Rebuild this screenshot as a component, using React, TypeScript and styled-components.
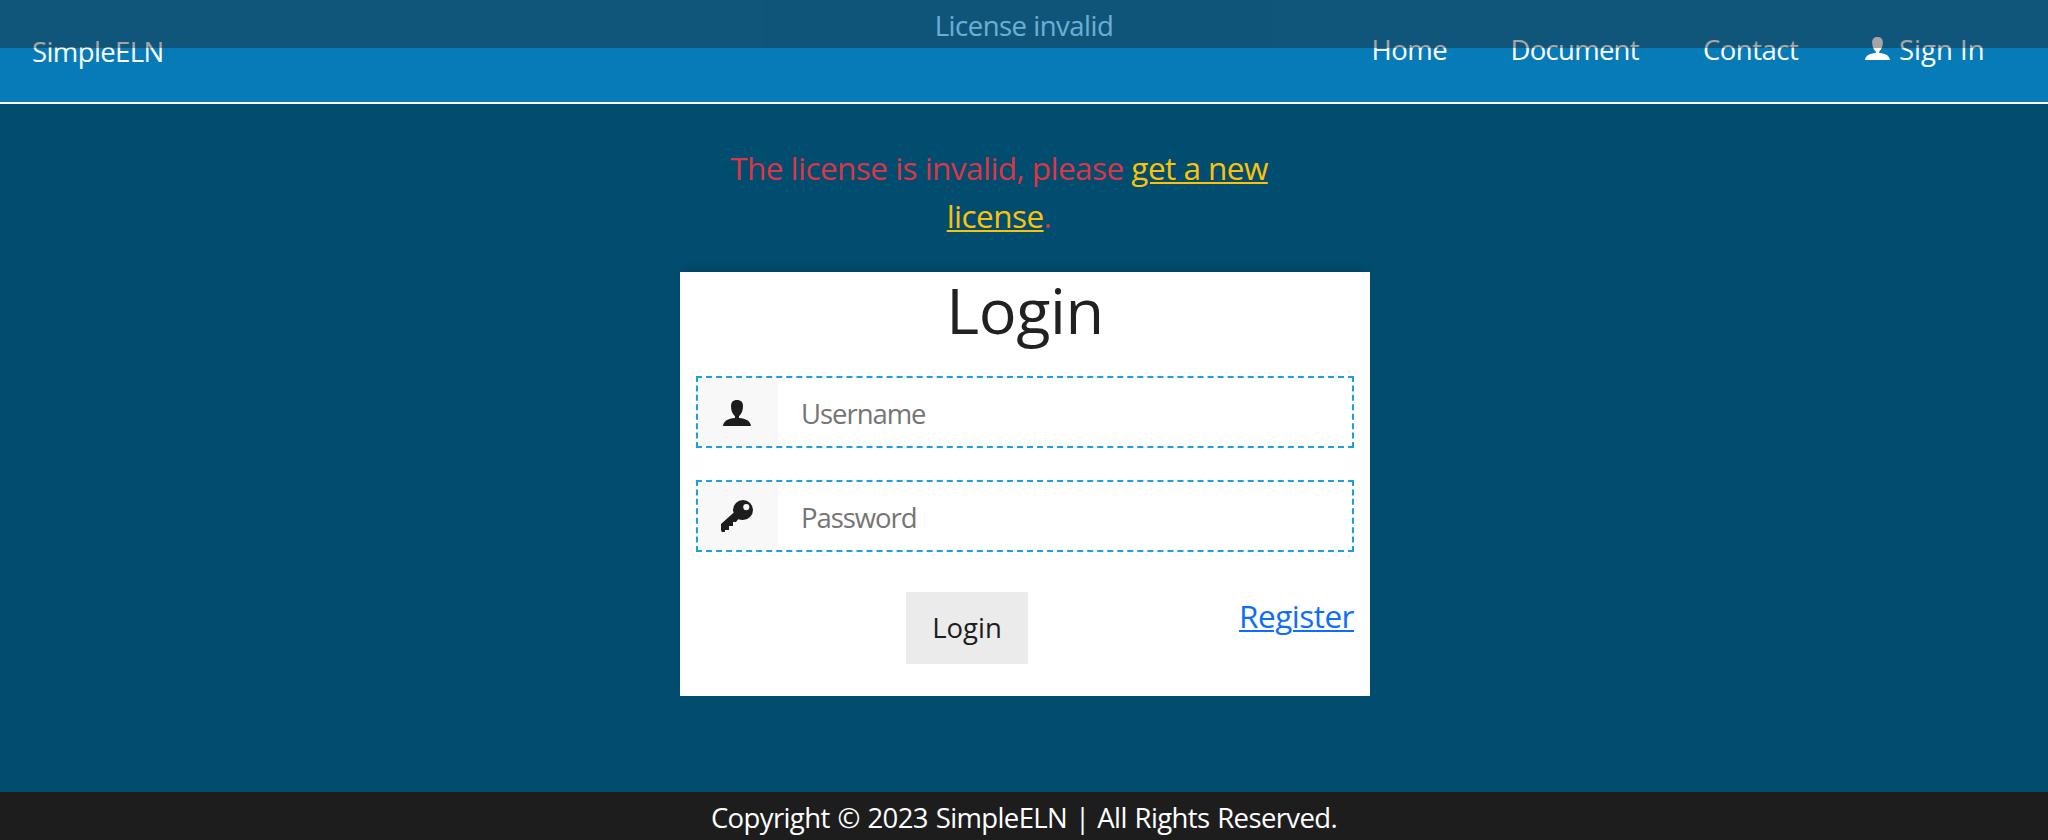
import React from 'react';
import styled, { createGlobalStyle } from 'styled-components';

const GlobalStyle = createGlobalStyle`
  *, *::before, *::after { box-sizing: border-box; }
  body {
    margin: 0;
    background: #004d6f;
    color: #1d1d1d;
    font-family: 'Segoe UI', 'Open Sans', 'Noto Sans', sans-serif;
    font-size: 27.5px;
    letter-spacing: -0.5px;
  }
`;

const Page = styled.div`
  position: relative;
  display: flex;
  flex-direction: column;
  height: 840px;
`;

const LicenseBanner = styled.div`
  position: absolute;
  top: 0;
  left: 0;
  right: 0;
  height: 48px;
  padding-top: 3px;
  line-height: 45px;
  text-align: center;
  color: #fff;
  background: #1d1d1d;
  opacity: 0.4;
`;

const Header = styled.header`
  display: flex;
  flex: none;
  justify-content: space-between;
  height: 104px;
  padding: 0 32px;
  background: #077ab8;
  border-bottom: 2px solid #fff;
`;

const Brand = styled.a`
  line-height: 104px;
  letter-spacing: -0.6px;
  color: #fff;
`;

const Nav = styled.nav`
  display: flex;
`;

const NavLink = styled.a<{ $width: number; $tracking?: number }>`
  display: flex;
  align-items: center;
  width: ${(p) => p.$width}px;
  height: 99px;
  padding-left: 32px;
  white-space: nowrap;
  letter-spacing: ${(p) => p.$tracking ?? -0.5}px;
  color: #fff;
`;

const NavUserIcon = styled.svg`
  flex: none;
  width: 25px;
  height: 23px;
  margin: -2px 9px 0 2px;
`;

const Main = styled.main`
  display: flex;
  flex: 1;
  flex-direction: column;
  width: 690px;
  margin: 0 678px 0 680px;
  padding-top: 40px;
`;

const LicenseMessage = styled.p`
  width: 638px;
  margin: 0 0 32px;
  padding: 0 40px;
  font-size: 31.5px;
  line-height: 48px;
  letter-spacing: -0.54px;
  text-align: center;
  color: #dc3545;
`;

const TextLink = styled.a<{ $color: string }>`
  color: ${(p) => p.$color};
  text-decoration: underline;
  text-decoration-thickness: 2px;
  text-underline-offset: 2px;
`;

const Card = styled.form`
  display: flex;
  flex-direction: column;
  height: 424px;
  padding: 0 16px;
  background: #fff;
  box-shadow: 0 -6px 10px -6px rgba(0, 0, 0, 0.25);
`;

const Title = styled.h1`
  height: 104px;
  margin: 0;
  font-size: 63px;
  font-weight: 400;
  line-height: 76px;
  letter-spacing: -0.4px;
  text-align: center;
  color: #212121;
`;

const Field = styled.label`
  display: flex;
  height: 72px;
  margin-bottom: 32px;
  border: 2px dashed #1ba1e2;
`;

const FieldIcon = styled.span`
  display: flex;
  flex: none;
  align-items: center;
  justify-content: center;
  width: 80px;
  background: #f8f8f8;
`;

const FieldSvg = styled.svg`
  width: 32px;
  height: 32px;
  margin-right: 2px;
`;

const Input = styled.input`
  flex: 1;
  min-width: 0;
  padding: 3px 22px 0 23px;
  border: 0;
  outline: 0;
  background: transparent;
  font: inherit;
  letter-spacing: -1.05px;
  &::placeholder { color: #757575; opacity: 1; }
`;

const Actions = styled.div`
  display: flex;
  align-items: flex-start;
  justify-content: space-between;
  margin-top: 8px;
  padding-left: 210px;
`;

const LoginButton = styled.button`
  width: 122px;
  height: 72px;
  padding: 0 0 1px;
  border: 0;
  background: #ebebeb;
  color: #1d1d1d;
  font: inherit;
  letter-spacing: 0;
`;

const RegisterSlot = styled.span`
  font-size: 31.5px;
  line-height: 48px;
  letter-spacing: -0.5px;
`;

const Footer = styled.footer`
  flex: none;
  height: 48px;
  padding-top: 3px;
  line-height: 45px;
  letter-spacing: -0.62px;
  word-spacing: 1.3px;
  text-align: center;
  color: #fff;
  background: #1d1d1d;
`;

const USER_PATH =
  'M14 0C10 0 8 2.3 8 6c0 4.800 1.400 8 4 10.200V18C5 18.400 0.500 21 0 26H28C27.500 21 23 18.400 16 18v-1.800C18.600 14 20 10.800 20 6C20 2.300 18 0 14 0Z';

export default function App() {
  return (
    <>
      <GlobalStyle />
      <Page>
        <Header>
          <Brand>SimpleELN</Brand>
          <Nav>
            <NavLink $width={139}>Home</NavLink>
            <NavLink $width={192.500} $tracking={-0.72}>Document</NavLink>
            <NavLink $width={160}>Contact</NavLink>
            <NavLink $width={185} $tracking={0}>
              <NavUserIcon viewBox="0 0 28 26" fill="#fff" preserveAspectRatio="none">
                <path d={USER_PATH} />
              </NavUserIcon>
              Sign In
            </NavLink>
          </Nav>
        </Header>
        <Main>
          <LicenseMessage>
            The license is invalid, please <TextLink $color="#ffc107">get a new license</TextLink>.
          </LicenseMessage>
          <Card>
            <Title>Login</Title>
            <Field>
              <FieldIcon>
                <FieldSvg viewBox="0 0 32 32" fill="#1d1d1d">
                  <path transform="translate(2 4)" d={USER_PATH} />
                </FieldSvg>
              </FieldIcon>
              <Input placeholder="Username" />
            </Field>
            <Field>
              <FieldIcon>
                <FieldSvg viewBox="0 0 32 32" fill="#1d1d1d">
                  <path
                    fillRule="evenodd"
                    d="M22 0a10 10 0 0 1 0 20q-3 0-4.800-.8L15 22h-3v4H8v4H4v2H1q-1-1-1-2v-6L12.800 12.500Q12 11.500 12 10A10 10 0 0 1 22 0ZM25.300 4a3.100 3.100 0 1 0 0 6.200a3.100 3.100 0 0 0 0-6.200Z"
                  />
                </FieldSvg>
              </FieldIcon>
              <Input type="password" placeholder="Password" />
            </Field>
            <Actions>
              <LoginButton type="button">Login</LoginButton>
              <RegisterSlot>
                <TextLink $color="#0d6efd">Register</TextLink>
              </RegisterSlot>
            </Actions>
          </Card>
        </Main>
        <Footer>Copyright © 2023 SimpleELN | All Rights Reserved.</Footer>
        <LicenseBanner>License invalid</LicenseBanner>
      </Page>
    </>
  );
}
